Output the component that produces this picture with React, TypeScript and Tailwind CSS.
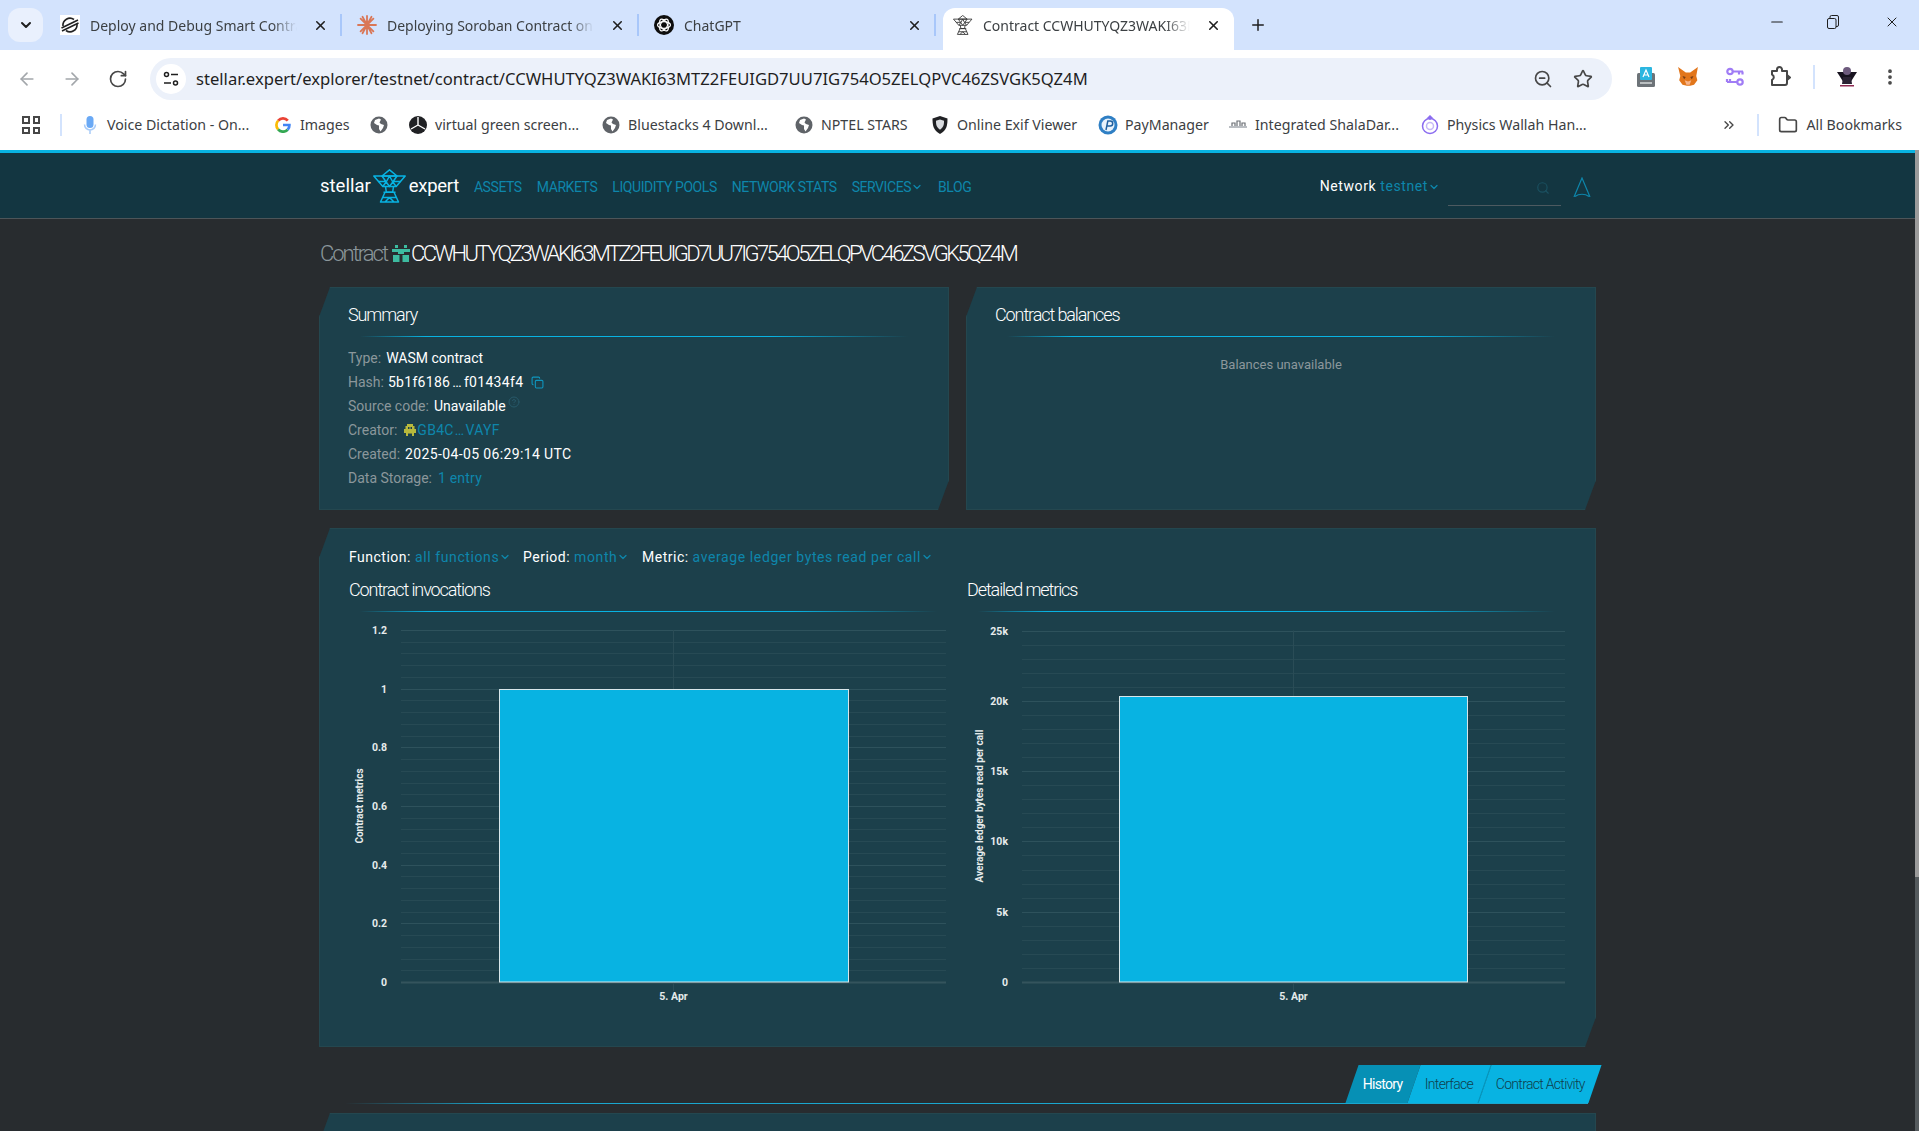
import {
  ArrowLeft,
  ArrowRight,
  ChevronDown,
  ChevronsRight,
  CircleHelp,
  Copy,
  EllipsisVertical,
  Folder,
  Minus,
  Plus,
  RotateCw,
  Search,
  Star,
  X,
  ZoomOut,
} from 'lucide-react';
import type { ReactNode } from 'react';

const cut =
  '[clip-path:polygon(11px_0,100%_0,100%_calc(100%_-_30px),calc(100%_-_11px)_100%,0_100%,0_30px)]';
const cardClass = `border border-[#24474f] bg-[#1c404b] ${cut}`;
const fade = '[mask-image:linear-gradient(to_right,black_88%,transparent)]';
const rule = 'h-px bg-[linear-gradient(to_right,transparent,#08b3e2_12%,#08b3e2_75%,transparent)]';

function StellarIcon() {
  return (
    <svg viewBox="0 0 20 20" className="h-5 w-5 bg-white" fill="none" stroke="#222" strokeWidth="1.6">
      <path d="M3 11a7 7 0 0 1 11-6.500M17 9a7 7 0 0 1-11 6.500" />
      <path d="M1.500 13 18 5M2 16 18.500 8" />
    </svg>
  );
}

function ClaudeIcon() {
  return (
    <svg viewBox="0 0 20 20" className="h-5 w-5" stroke="#d97757" strokeWidth="1.8" strokeLinecap="round">
      <path d="M10 1v18M1 10h18M3.600 3.600l12.800 12.800M16.400 3.600 3.600 16.400M5.500 1.800l9 16.400M14.500 1.800l-9 16.400" />
    </svg>
  );
}

function GptIcon() {
  return (
    <svg viewBox="0 0 20 20" className="h-5 w-5">
      <circle cx="10" cy="10" r="10" fill="#0d0d0d" />
      <g fill="none" stroke="#fff" strokeWidth="1.2">
        <ellipse cx="10" cy="10" rx="6.500" ry="3.400" />
        <ellipse cx="10" cy="10" rx="6.500" ry="3.400" transform="rotate(60 10 10)" />
        <ellipse cx="10" cy="10" rx="6.500" ry="3.400" transform="rotate(120 10 10)" />
      </g>
    </svg>
  );
}

function ExpertLines({ className, color }: { className: string; color: string }) {
  return (
    <svg viewBox="0 0 34 34" className={className} fill="none" stroke={color} strokeWidth="1.5" strokeLinejoin="round">
      <path d="M16.500 .8 9 7h15z" />
      <path d="M.8 7h31.400l-9 10.500H9.800z" />
      <path d="M9 7l4.200 6 3.300-6 3.300 6L24 7M5.500 12.500h7.700M20 12.500h7.500M9.800 17.500l3.400-4.500 3.300 4.500 3.300-4.500 3.400 4.500" />
      <path d="M12.500 17.500l.8 5.500h6.400l.8-5.500M10.500 23.200h12" />
      <path d="M12 23.200 7.500 33h18L21 23.200M9.500 28.500h14M12 33l4.500-4.500L21 33" />
    </svg>
  );
}

function MicIcon() {
  return (
    <svg viewBox="0 0 20 20" className="h-5 w-5">
      <rect x="6.500" y="1" width="7" height="12" rx="3.500" fill="#6aa9f5" />
      <path d="M4.500 9.500a5.500 5.500 0 0 0 11 0M10 15v4" fill="none" stroke="#a8cbf8" strokeWidth="1.500" />
    </svg>
  );
}

function GoogleIcon() {
  return (
    <svg viewBox="0 0 20 20" className="h-4 w-4" fill="none" strokeWidth="3.400">
      <path d="M16 4.600A8 8 0 0 0 4 4.500" stroke="#ea4335" />
      <path d="M4 4.500a8 8 0 0 0-.1 11" stroke="#fbbc05" />
      <path d="M3.900 15.500a8 8 0 0 0 11.900.4" stroke="#34a853" />
      <path d="M15.800 15.900A8 8 0 0 0 18 10h-8" stroke="#4285f4" />
    </svg>
  );
}

function GlobeIcon() {
  return (
    <svg viewBox="0 0 18 18" className="h-[18px] w-[18px]">
      <circle cx="9" cy="9" r="8.500" fill="#5f6368" />
      <path d="M9 2.500 5 4l-1 3 3 2 2 .5V13l1.500 2.500L13 12l1-3-3-1-1.500-1.500L11 3.500z" fill="#fff" />
    </svg>
  );
}

function SwirlIcon() {
  return (
    <svg viewBox="0 0 20 20" className="h-5 w-5">
      <circle cx="10" cy="10" r="9" fill="#202124" />
      <path d="M10 10 10 2M10 10l7 4M10 10l-7 4" stroke="#fff" strokeWidth="1.400" />
    </svg>
  );
}

function ShieldIcon() {
  return (
    <svg viewBox="0 0 20 20" className="h-5 w-5">
      <path d="M10 1 2.500 3.500c0 7 .8 11.500 7.500 15.500 6.700-4 7.500-8.500 7.500-15.500z" fill="#202124" />
      <path d="M10 4.500 6 5.800c0 4 .4 6.500 4 9 3.600-2.500 4-5 4-9z" fill="#dadce0" />
    </svg>
  );
}

function PayIcon() {
  return (
    <svg viewBox="0 0 20 20" className="h-5 w-5">
      <circle cx="10" cy="10" r="9.500" fill="#2f7fc4" />
      <circle cx="10" cy="10" r="6.500" fill="#e8f2fb" />
      <path d="M8 15l1.800-9h2.400a2 2 0 0 1 0 5H9.500" fill="none" stroke="#1e5f9e" strokeWidth="1.500" />
    </svg>
  );
}

function ShalaIcon() {
  return (
    <svg viewBox="0 0 20 14" className="h-[14px] w-5">
      <path d="M1 8h18v2H1z" fill="#b9bdc2" />
      <path d="M4 8V5h3v3M9 8V3h3v5M14 8V5h3v3" fill="none" stroke="#6b6f75" strokeWidth="1.200" />
    </svg>
  );
}

function WallahIcon() {
  return (
    <svg viewBox="0 0 20 20" className="h-5 w-5" fill="none" stroke="#8b6cf0" strokeWidth="1.500">
      <circle cx="10" cy="11" r="7.500" />
      <path d="M10 1v4M7.500 3.500 10 1l2.500 2.500" />
      <circle cx="10" cy="11" r="3.500" stroke="#c7b8f7" />
    </svg>
  );
}

function KeyboardIcon() {
  return (
    <svg viewBox="0 0 20 20" className="h-5 w-5">
      <rect x="1" y="6" width="18" height="14" rx="1.500" fill="#6d7378" />
      <rect x="4" y="0" width="12" height="13" rx="1" fill="#2bb6e0" />
      <path d="M7 10l3-7 3 7M8 8h4" fill="none" stroke="#fff" strokeWidth="1.200" />
      <path d="M4 16h12" stroke="#d5d8da" strokeWidth="1.500" />
    </svg>
  );
}

function FoxIcon() {
  return (
    <svg viewBox="0 0 20 20" className="h-[22px] w-[22px]">
      <path d="M1 1l7 5h4l7-5-1.500 8 1 4-3 4-3.500 1h-3L5 17l-3-4 1-4z" fill="#e2761b" />
      <path d="M5 9l3 1-1.500 2zM15 9l-3 1 1.500 2z" fill="#763d16" />
      <path d="M7 13l3 1 3-1-1.500 4h-3z" fill="#f6b48a" />
    </svg>
  );
}

function KeysIcon() {
  return (
    <svg viewBox="0 0 20 20" className="h-5 w-5" fill="none" stroke="#a07cf5" strokeWidth="2.200">
      <circle cx="5" cy="4.500" r="2.700" />
      <path d="M8 4.500h10M14 4.500v3M17.500 4.500v3" />
      <circle cx="15" cy="15" r="2.700" />
      <path d="M12 15H2M5 15v-3M2 15v-3" />
    </svg>
  );
}

function ExtensionsIcon() {
  return (
    <svg viewBox="0 0 22 22" className="h-[22px] w-[22px]" fill="none" stroke="#474747" strokeWidth="2" strokeLinejoin="round">
      <path d="M3 5h5V3.500a2.500 2.500 0 0 1 5 0V5h5v12a2 2 0 0 1-2 2H3v-5a3 3 0 0 0 0-5.500z" />
      <path d="M18 9l3 2.500-3 2.500z" fill="#474747" />
    </svg>
  );
}

function ProfileIcon() {
  return (
    <svg viewBox="0 0 24 24" className="h-6 w-6">
      <path d="M2 7h20l-7 11H9z" fill="#17121f" />
      <circle cx="12" cy="6" r="4" fill="#6d5a7d" />
      <path d="M8 12h8l1 7H7z" fill="#2a2233" />
      <path d="M5 20h14v1.500H5z" fill="#8e2a52" />
    </svg>
  );
}

function TuneIcon() {
  return (
    <svg viewBox="0 0 16 16" className="h-4 w-4" fill="none" stroke="#1f1f1f" strokeWidth="1.500">
      <circle cx="3.500" cy="3.500" r="2" />
      <path d="M8 3.500h7M1 12h7" />
      <circle cx="12.500" cy="12" r="2" />
    </svg>
  );
}

function RestoreIcon() {
  return (
    <svg viewBox="0 0 14 14" className="h-[14px] w-[14px]" fill="none" stroke="#1f1f1f" strokeWidth="1">
      <rect x="1.500" y="3.500" width="8.500" height="10" rx="1.500" />
      <path d="M4 3.500V2a1.500 1.500 0 0 1 1.500-1.500H11A1.500 1.500 0 0 1 12.500 2v8A1.500 1.500 0 0 1 11 11.500h-1" />
    </svg>
  );
}

function ContractIcon() {
  return (
    <svg viewBox="0 0 18 17" className="h-[17px] w-[18px]" fill="#3dbba0">
      <path d="M3 0h3v3H3zM12 0h3v3h-3zM0 4h18v3H0zM6 7h6v2H6z" />
      <path d="M1 10h6.500v7H1zM10.500 10H17v7h-6.500z" />
    </svg>
  );
}

function CreatorIcon() {
  return (
    <svg viewBox="0 0 12 12" className="ml-[2px] h-3 w-3" fill="#b8b93c">
      <path d="M3 0h6v2h1.500v3H12v4h-2v3H8V9.500H4V12H2V9H0V5h1.500V2H3z" />
      <path d="M4 3h1.500v2H4zM6.500 3H8v2H6.500z" fill="#1c404b" />
    </svg>
  );
}

function Tab({ icon, title, active }: { icon: ReactNode; title: string; active?: boolean }) {
  return (
    <div className="flex h-[42px] w-[297px] items-center">
      <div
        className={`flex h-full items-center rounded-t-xl pb-2 ${active ? 'ml-1 w-[291px] bg-white pl-[10px]' : 'w-[292px] pl-3'}`}
      >
        {icon}
        <span className={`ml-[10px] w-[207px] overflow-hidden whitespace-nowrap text-[14px] text-[#3c4043] ${fade}`}>
          {title}
        </span>
        <X className="ml-4 h-[15px] w-[15px] text-[#1f1f1f]" strokeWidth={2.5} />
      </div>
      {!active && <div className="mb-2 h-[22px] w-[2px] bg-[#a8c7fa]" />}
    </div>
  );
}

function Bookmark({ icon, label, className }: { icon: ReactNode; label?: string; className: string }) {
  return (
    <div className={`flex items-center ${className}`}>
      <div className="flex h-5 w-5 items-center justify-center">{icon}</div>
      {label && <span className="ml-[7px] whitespace-nowrap text-[14.200px] text-[#3c4043]">{label}</span>}
    </div>
  );
}

function BrowserChrome() {
  return (
    <div className="h-[150px] bg-white font-['Noto_Sans',sans-serif]">
      <div className="flex h-[50px] items-end bg-[#d3e3fd] pl-2">
        <div className="mb-2 flex h-[34px] w-[35px] items-center justify-center rounded-xl bg-[#e9f0fd]">
          <ChevronDown className="h-4 w-4 text-[#1f1f1f]" strokeWidth={3} />
        </div>
        <div className="ml-[5px] flex">
          <Tab icon={<StellarIcon />} title="Deploy and Debug Smart Contracts" />
          <Tab icon={<ClaudeIcon />} title="Deploying Soroban Contract on Testnet" />
          <Tab icon={<GptIcon />} title="ChatGPT" />
          <Tab
            active
            icon={<ExpertLines className="h-5 w-5" color="#333" />}
            title="Contract CCWHUTYQZ3WAKI63MTZ2FEUIGD7UU"
          />
        </div>
        <Plus className="mb-[16px] ml-[13px] h-[18px] w-[18px] text-[#1f1f1f]" />
        <div className="mb-[19px] ml-auto flex items-center">
          <Minus className="h-[18px] w-[18px] text-[#1f1f1f]" strokeWidth={1.5} />
          <div className="ml-[40px]">
            <RestoreIcon />
          </div>
          <X className="ml-[44px] mr-[19px] h-4 w-4 text-[#1f1f1f]" strokeWidth={1.5} />
        </div>
      </div>

      <div className="flex h-[50px] items-end pb-0">
        <ArrowLeft className="mb-[11px] ml-[17px] h-5 w-5 text-[#a3a7ab]" strokeWidth={2} />
        <ArrowRight className="mb-[11px] ml-[25px] h-5 w-5 text-[#a3a7ab]" strokeWidth={2} />
        <RotateCw className="mb-[11px] ml-[26px] h-5 w-5 text-[#474747]" strokeWidth={2} />
        <div className="ml-[22px] flex h-[42px] w-[1462px] items-center rounded-full bg-[#ecf1fa] pl-[6px]">
          <div className="flex h-[30px] w-[30px] items-center justify-center rounded-full bg-white">
            <TuneIcon />
          </div>
          <span className="ml-[10px] whitespace-nowrap text-[16.620px] text-[#1f1f1f]">
            stellar.expert/explorer/testnet/contract/CCWHUTYQZ3WAKI63MTZ2FEUIGD7UU7IG754O5ZELQPVC46ZSVGK5QZ4M
          </span>
          <ZoomOut className="ml-auto h-5 w-5 text-[#474747]" strokeWidth={2} />
          <Star className="ml-5 mr-[19px] h-5 w-5 text-[#474747]" strokeWidth={2} />
        </div>
        <div className="mb-[11px] ml-[24px] flex items-center">
          <KeyboardIcon />
          <div className="ml-[21px]">
            <FoxIcon />
          </div>
          <div className="ml-[26px]">
            <KeysIcon />
          </div>
          <div className="ml-[24px]">
            <ExtensionsIcon />
          </div>
          <div className="ml-[22px] h-6 w-[2px] bg-[#d3e3fd]" />
          <div className="ml-[20px]">
            <ProfileIcon />
          </div>
          <EllipsisVertical className="ml-[21px] h-5 w-5 text-[#474747]" strokeWidth={2.500} />
        </div>
      </div>

      <div className="flex h-[50px] items-center pl-[22px] pr-[17px]">
        <div className="grid h-[18px] w-[18px] grid-cols-2 gap-[3px]">
          <div className="border-2 border-[#474747]" />
          <div className="border-2 border-[#474747]" />
          <div className="border-2 border-[#474747]" />
          <div className="border-2 border-[#474747]" />
        </div>
        <div className="ml-[20px] h-[22px] w-[2px] bg-[#d3e3fd]" />
        <div className="ml-[18px] flex">
          <Bookmark icon={<MicIcon />} label="Voice Dictation - On..." className="w-[193px]" />
          <Bookmark icon={<GoogleIcon />} label="Images" className="w-[96px]" />
          <Bookmark icon={<GlobeIcon />} className="w-[39px]" />
          <Bookmark icon={<SwirlIcon />} label="virtual green screen..." className="w-[193px]" />
          <Bookmark icon={<GlobeIcon />} label="Bluestacks 4 Downl..." className="w-[193px]" />
          <Bookmark icon={<GlobeIcon />} label="NPTEL STARS" className="w-[136px]" />
          <Bookmark icon={<ShieldIcon />} label="Online Exif Viewer" className="w-[168px]" />
          <Bookmark icon={<PayIcon />} label="PayManager" className="w-[130px]" />
          <Bookmark icon={<ShalaIcon />} label="Integrated ShalaDar..." className="w-[192px]" />
          <Bookmark icon={<WallahIcon />} label="Physics Wallah Han..." className="w-[166px]" />
        </div>
        <div className="ml-auto flex items-center">
          <ChevronsRight className="h-4 w-4 text-[#474747]" strokeWidth={2} />
          <div className="ml-[20px] h-[22px] w-[2px] bg-[#d3e3fd]" />
          <Folder className="ml-[19px] h-5 w-5 text-[#474747]" strokeWidth={2} />
          <span className="ml-[9px] whitespace-nowrap text-[14.200px] text-[#3c4043]">All Bookmarks</span>
        </div>
      </div>
    </div>
  );
}

function SiteHeader() {
  return (
    <header className="h-[69px] border-t-[3px] border-b border-t-[#08b3e2] border-b-[#4d5559] bg-[#133641]">
      <div className="mx-auto flex h-full w-[1277px] items-center pl-px pt-[2px] text-[14px] text-[#0e86ab]">
        <div className="flex items-center text-[18.500px] text-white">
          <span>stellar</span>
          <ExpertLines className="mx-[2px] mt-[-2px] h-[34px] w-[34px]" color="#08b3e2" />
          <span className="tracking-[-0.3px]">expert</span>
        </div>
        <nav className="ml-[15px] flex items-center gap-[15px] pt-px tracking-[-0.43px]">
          <span>ASSETS</span>
          <span>MARKETS</span>
          <span>LIQUIDITY POOLS</span>
          <span>NETWORK STATS</span>
          <span className="flex items-center">
            SERVICES
            <ChevronDown className="h-3 w-3" strokeWidth={2.5} />
          </span>
          <span>BLOG</span>
        </nav>
        <div className="ml-auto flex items-center tracking-[0.6px]">
          <span className="text-white">Network</span>
          <span className="ml-1">testnet</span>
          <ChevronDown className="h-3 w-3" strokeWidth={2.5} />
          <div className="ml-2 flex h-[38px] w-[113px] items-center justify-end border-b border-[#4d5a60] pr-[11px] pt-1">
            <Search className="h-[14px] w-[14px] text-[#1a5060]" />
          </div>
          <svg viewBox="0 0 18 20" className="ml-[12px] mr-[5px] h-5 w-[18px]" fill="none" stroke="#0e86ab" strokeWidth="1.200">
            <path d="M1 20 9 1l8 19M2 19.500c4-3 10-3 14 0" />
          </svg>
        </div>
      </div>
    </header>
  );
}

function Row({ label, children }: { label: string; children: ReactNode }) {
  return (
    <div className="flex h-6 items-center whitespace-nowrap text-[14px]">
      <span className="mr-[5px] text-[#8b979b]">{label}</span>
      {children}
    </div>
  );
}

function CardTitle({ children }: { children: ReactNode }) {
  return <h3 className="h-6 text-[18px] font-light leading-6 tracking-[-1.100px] text-white">{children}</h3>;
}

function Filter({ label, value, className }: { label: string; value: string; className: string }) {
  return (
    <div className={`flex items-center whitespace-nowrap tracking-[0.5px] ${className}`}>
      <span className="text-white">{label}</span>
      <span className="ml-1 tracking-[0.6px] text-[#0e86ab]">{value}</span>
      <ChevronDown className="h-3 w-3 text-[#0e86ab]" strokeWidth={2.5} />
    </div>
  );
}

type ChartProps = {
  title: string;
  axis: string;
  ticks: string[];
  axisX: number;
  left: number;
  right: number;
  top: number;
  barLeft: number;
  barRight: number;
  barTop: number;
  axisTitleX: number;
};

function Chart(p: ChartProps) {
  const zero = 362;
  const major = (zero - p.top) / (p.ticks.length - 1);
  const minor = major / 5;
  const count = (p.ticks.length - 1) * 5;
  const center = (p.left + p.right) / 2;
  return (
    <div>
      <CardTitle>{p.title}</CardTitle>
      <div className={`ml-[11px] mt-[9px] w-[577px] ${rule}`} />
      <svg viewBox="0 0 618 400" className="mt-2 h-[400px] w-[618px] font-['Roboto',sans-serif]">
        {Array.from({ length: count + 1 }, (_, i) => {
          const y = Math.round(zero - i * minor) + 0.5;
          return (
            <line
              key={i}
              x1={p.left}
              x2={p.right}
              y1={y}
              y2={y}
              stroke={i === 0 ? '#34545d' : i % 5 === 0 ? '#2e525c' : '#274a54'}
              strokeWidth={i === 0 ? 2 : 1}
            />
          );
        })}
        <line x1={center} x2={center} y1={p.top} y2={p.barTop} stroke="#2a4c56" />
        <line x1={center} x2={center} y1={zero} y2={zero + 9} stroke="#2a4c56" />
        <rect
          x={p.barLeft}
          y={p.barTop}
          width={p.barRight - p.barLeft}
          height={zero - p.barTop}
          fill="#08b3e2"
          stroke="#d8e6ea"
          strokeWidth="1"
        />
        {p.ticks.map((t, i) => (
          <text
            key={t}
            x={p.axisX}
            y={zero - i * major + 4}
            textAnchor="end"
            fontSize="10.500"
            fontWeight="700"
            fill="#e6ebec"
          >
            {t}
          </text>
        ))}
        <text x={center} y={380} textAnchor="middle" fontSize="10.500" fontWeight="700" fill="#e6ebec">
          5. Apr
        </text>
        <text
          transform={`translate(${p.axisTitleX} 186) rotate(-90)`}
          textAnchor="middle"
          fontSize="10"
          fontWeight="700"
          fill="#e6ebec"
        >
          {p.axis}
        </text>
      </svg>
    </div>
  );
}

export default function App() {
  return (
    <div className="h-[1131px] overflow-hidden bg-white">
      <BrowserChrome />
      <div className="flex h-[981px]">
        <main className="h-full min-w-0 flex-1 overflow-hidden bg-[#282c2f] font-['Roboto',sans-serif]">
          <SiteHeader />
          <div className="mx-auto w-[1277px]">
            <h1 className="flex h-[68px] items-center pl-px text-[22px] font-light">
              <span className="tracking-[-2px] text-[#8b979b]">Contract</span>
              <span className="ml-[5px] mr-[1px]">
                <ContractIcon />
              </span>
              <span className="tracking-[-2.570px] text-white">CCWHUTYQZ3WAKI63MTZ2FEUIGD7UU7IG754O5ZELQPVC46ZSVGK5QZ4M</span>
            </h1>

            <div className="grid grid-cols-2 gap-x-[17px]">
              <section className={`h-[223px] px-7 pt-[15px] ${cardClass}`}>
                <CardTitle>Summary</CardTitle>
                <div className={`ml-3 mt-[9px] w-[548px] ${rule}`} />
                <div className="mt-[9px] text-white">
                  <Row label="Type:">WASM contract</Row>
                  <Row label="Hash:">
                    <span className="-ml-px tracking-[0.3px]">5b1f6186<span className="mx-[2px]">…</span>f01434f4</span>
                    <Copy className="ml-[8px] h-[13px] w-[13px] text-[#0e96bf]" />
                  </Row>
                  <Row label="Source code:">
                    Unavailable
                    <CircleHelp className="mb-2 ml-[2px] h-3 w-3 text-[#28596a]" />
                  </Row>
                  <Row label="Creator:">
                    <CreatorIcon />
                    <span className="ml-[1px] tracking-[0.3px] text-[#0e86ab]">GB4C<span className="mx-[1px]">…</span>VAYF</span>
                  </Row>
                  <Row label="Created:">
                    <span className="tracking-[0.37px]">2025-04-05 06:29:14 UTC</span>
                  </Row>
                  <Row label="Data Storage:">
                    <span className="ml-px tracking-[0.2px] text-[#0e86ab]">1 entry</span>
                  </Row>
                </div>
              </section>
              <section className={`h-[223px] px-7 pt-[15px] ${cardClass}`}>
                <CardTitle>Contract balances</CardTitle>
                <div className={`ml-3 mt-[9px] w-[548px] ${rule}`} />
                <p className="mt-[18px] text-center text-[13px] text-[#8b979b]">Balances unavailable</p>
              </section>
            </div>

            <section className={`mt-[18px] h-[519px] pl-[29px] pt-[16px] ${cardClass}`}>
              <div className="flex h-6 items-center text-[14px]">
                <Filter label="Function:" value="all functions" className="w-[174px]" />
                <Filter label="Period:" value="month" className="w-[119px]" />
                <Filter label="Metric:" value="average ledger bytes read per call" className="" />
              </div>
              <div className="mt-[9px] grid w-[1236px] grid-cols-2">
                <Chart
                  title="Contract invocations"
                  axis="Contract metrics"
                  ticks={['0', '0.2', '0.4', '0.6', '0.8', '1', '1.2']}
                  axisX={38}
                  left={52}
                  right={597}
                  top={10}
                  barLeft={150.500}
                  barRight={499.500}
                  barTop={69.500}
                  axisTitleX={14}
                />
                <Chart
                  title="Detailed metrics"
                  axis="Average ledger bytes read per call"
                  ticks={['0', '5k', '10k', '15k', '20k', '25k']}
                  axisX={41}
                  left={55}
                  right={598}
                  top={10.500}
                  barLeft={152.500}
                  barRight={500.500}
                  barTop={76.500}
                  axisTitleX={16}
                />
              </div>
            </section>

            <div className="mt-[18px] flex h-[38px] justify-end pr-px text-[14px] font-light tracking-[-0.7px]">
              <div className="flex h-full w-[62px] -skew-x-[19deg] items-center justify-center bg-[#0690b5] font-normal text-white">
                <span className="skew-x-[19deg]">History</span>
              </div>
              <div className="flex h-full w-[71px] -skew-x-[19deg] items-center justify-center border-r border-[#0690b5] bg-[#08b3e2] text-[#0f3f4d]">
                <span className="skew-x-[19deg]">Interface</span>
              </div>
              <div className="flex h-full w-[110px] -skew-x-[19deg] items-center justify-center bg-[#08b3e2] text-[#0f3f4d]">
                <span className="skew-x-[19deg]">Contract Activity</span>
              </div>
            </div>
            <div className="ml-[26px] mr-[8px] h-px bg-[linear-gradient(to_right,transparent,#1aa7cf_12%)]" />
            <section className={`mt-[9px] h-[200px] ${cardClass}`} />
          </div>
        </main>
        <div className="flex h-full w-1 flex-col bg-[#555b5e]">
          <div className="h-[727px] bg-[#9b9b9b]" />
        </div>
      </div>
    </div>
  );
}
